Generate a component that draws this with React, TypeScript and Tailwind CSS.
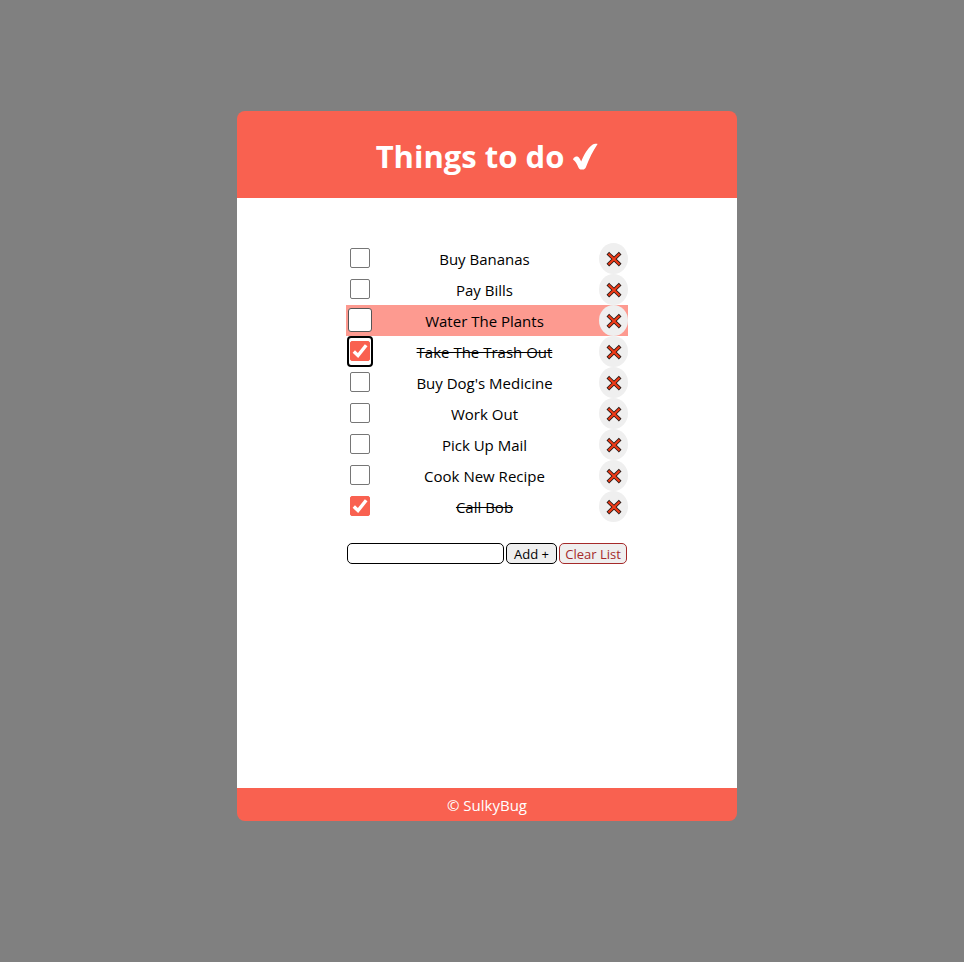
import { useState } from "react";

type Item = {
  id: number;
  text: string;
  done: boolean;
  highlighted?: boolean;
  focused?: boolean;
};

const initialItems: Item[] = [
  { id: 1, text: "Buy Bananas", done: false },
  { id: 2, text: "Pay Bills", done: false },
  { id: 3, text: "Water The Plants", done: false, highlighted: true },
  { id: 4, text: "Take The Trash Out", done: true, focused: true },
  { id: 5, text: "Buy Dog's Medicine", done: false },
  { id: 6, text: "Work Out", done: false },
  { id: 7, text: "Pick Up Mail", done: false },
  { id: 8, text: "Cook New Recipe", done: false },
  { id: 9, text: "Call Bob", done: true },
];

function CheckMark() {
  return (
    <svg viewBox="0 0 26 28" className="h-7 w-[26px]" fill="currentColor" aria-hidden="true">
      <path d="M1.2 16.8C0.8 15 3.6 13 5.4 13.6C7.3 14.2 8.2 16.8 9.2 18.6C11.6 12 16 5 19.8 2.2C21.2 1.1 24 0.6 25.6 0.9C21.2 7.6 17 15.6 14.2 23.4C13.4 25.6 12.4 26.4 10.6 26.5C8 26.7 7.2 26.2 6.2 24C5 21 3.4 18.2 1.2 16.8Z" />
    </svg>
  );
}

function Cross() {
  return (
    <svg viewBox="0 0 16 16" className="size-4" fill="none" strokeLinecap="square" aria-hidden="true">
      <path d="M3.2 3.5 12.8 12.7M12.8 3.5 3.2 12.7" stroke="#2a1a16" strokeWidth="3.8" />
      <path d="M3.2 3.5 12.8 12.7M12.8 3.5 3.2 12.7" stroke="#f03a17" strokeWidth="2.1" />
    </svg>
  );
}

function Row({ item, onToggle, onRemove }: { item: Item; onToggle: () => void; onRemove: () => void }) {
  const inputId = `item-${item.id}`;
  const box = item.highlighted ? "size-6 rounded-[3px] border-[#555]" : "size-5 rounded-[2px] border-[#767676]";
  const ring = item.focused ? "border-black" : "border-transparent";
  return (
    <li className={`flex h-[31px] items-center ${item.highlighted ? "bg-[#fd9a90]" : ""}`}>
      <span
        className={`mx-px flex h-[31px] w-[26px] items-center justify-center rounded-[4px] border-2 pb-px ${ring}`}
      >
        <span className="relative flex shrink-0">
          <input
            id={inputId}
            type="checkbox"
            checked={item.done}
            onChange={onToggle}
            className={`peer appearance-none border bg-white checked:border-[#f96150] checked:bg-[#f96150] ${box}`}
          />
          <svg
            viewBox="0 0 20 20"
            className="pointer-events-none absolute inset-0 hidden size-full peer-checked:block"
            fill="none"
            stroke="#fff"
            strokeWidth="3.4"
            aria-hidden="true"
          >
            <path d="M3.8 10.6 8 14.6 16.2 4.2" />
          </svg>
        </span>
      </span>
      <label htmlFor={inputId} className={`flex-1 pr-1 text-center ${item.done ? "line-through" : ""}`}>
        {item.text}
      </label>
      <button
        type="button"
        aria-label={`Delete ${item.text}`}
        onClick={onRemove}
        className="flex h-[31px] w-[29px] items-center justify-center rounded-[50%] bg-[#efefef]"
      >
        <Cross />
      </button>
    </li>
  );
}

export default function App() {
  const [items, setItems] = useState(initialItems);
  const [draft, setDraft] = useState("");

  const add = () => {
    if (!draft.trim()) return;
    setItems([...items, { id: Date.now(), text: draft, done: false }]);
    setDraft("");
  };

  return (
    <div className="flex min-h-screen items-center justify-center bg-[#808080] pb-[30px] pl-[10px] font-['Open_Sans','Noto_Sans',sans-serif] text-[15px] leading-5 text-black">
      <main className="flex min-h-[710px] w-full max-w-[500px] flex-col">
        <header className="flex items-center justify-center gap-2 rounded-t-lg bg-[#f96150] pt-6 pb-5 text-white">
          <h1 className="text-[31px] leading-[43px] font-bold">Things to do</h1>
          <CheckMark />
        </header>

        <section className="flex flex-1 justify-center bg-white pt-[45px]">
          <div className="w-[282px]">
            <ul>
              {items.map((item) => (
                <Row
                  key={item.id}
                  item={item}
                  onToggle={() => setItems(items.map((i) => (i.id === item.id ? { ...i, done: !i.done } : i)))}
                  onRemove={() => setItems(items.filter((i) => i.id !== item.id))}
                />
              ))}
            </ul>
            <form
              className="mt-[21px] flex gap-0.5 px-px text-[13px]"
              onSubmit={(e) => {
                e.preventDefault();
                add();
              }}
            >
              <input
                type="text"
                aria-label="New item"
                value={draft}
                onChange={(e) => setDraft(e.target.value)}
                className="h-[21px] min-w-0 flex-1 rounded-[5px] border border-black bg-white px-1"
              />
              <button type="submit" className="h-[21px] w-[51px] rounded-[5px] border border-black bg-[#efefef] leading-4">
                Add +
              </button>
              <button
                type="button"
                onClick={() => setItems([])}
                className="h-[21px] w-[68px] rounded-[5px] border border-[#a52a2a] bg-[#efefef] leading-4 whitespace-nowrap text-[#a52a2a]"
              >
                Clear List
              </button>
            </form>
          </div>
        </section>

        <footer className="rounded-b-lg bg-[#f96150] pt-[7px] pb-1.5 text-center text-white">© SulkyBug</footer>
      </main>
    </div>
  );
}
